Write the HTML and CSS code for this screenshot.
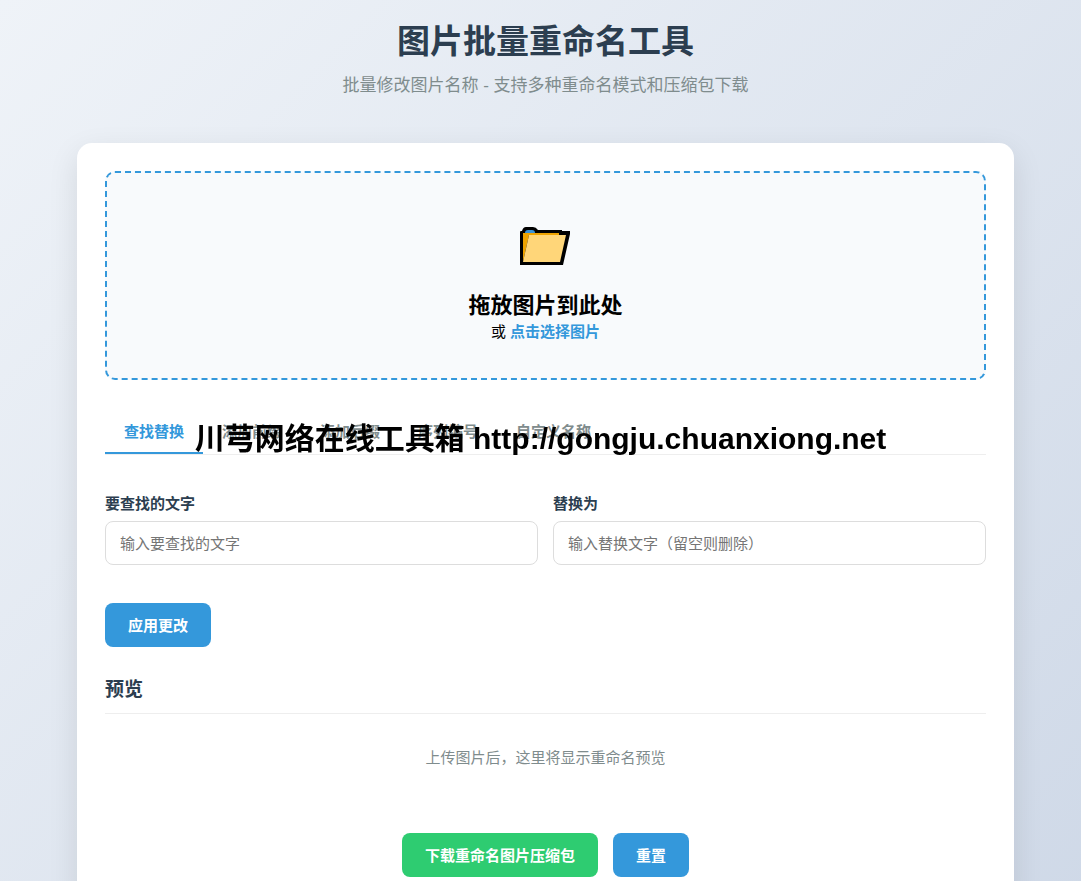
FILE: index.html
```html
<!DOCTYPE html>
<html lang="zh-CN">
<head>
  <meta charset="UTF-8">
  <meta name="viewport" content="width=device-width, initial-scale=1.0">
  <title>图片批量重命名工具</title>
  <link rel="stylesheet" href="styles.css">
</head>
<body>
  <div class="container">
    <header>
      <h1>图片批量重命名工具</h1>
      <p class="subtitle">批量修改图片名称 - 支持多种重命名模式和压缩包下载</p>
    </header>

    <main class="card">
      <div class="drop-area" id="dropArea">
        <svg class="folder-icon" viewBox="0 0 51 39" aria-hidden="true">
          <path d="M0 38V5Q0 4 1 4H2Q3 0 6 0H13Q16 0 18 3H42V4H50V7L43 38Z" fill="#000"/>
          <path d="M5 6Q5 3 8 3H12Q15 3 15 6Z" fill="#3a93d9"/>
          <path d="M3 6H39V8H9L3 35Z" fill="#eea300"/>
          <path d="M9 8H46L40 35H3Z" fill="#ffd679"/>
        </svg>
        <h2>拖放图片到此处</h2>
        <p>或 <label class="browse" for="fileInput">点击选择图片</label></p>
        <input type="file" id="fileInput" accept="image/*" multiple hidden>
      </div>

      <div class="tabs">
        <button type="button" class="tab active">查找替换</button>
        <button type="button" class="tab">添加前缀</button>
        <button type="button" class="tab">添加后缀</button>
        <button type="button" class="tab">序列编号</button>
        <button type="button" class="tab">自定义名称</button>
      </div>

      <form id="renameForm">
        <div class="form-row">
          <div class="form-group">
            <label for="findText">要查找的文字</label>
            <input type="text" id="findText" placeholder="输入要查找的文字">
          </div>
          <div class="form-group">
            <label for="replaceText">替换为</label>
            <input type="text" id="replaceText" placeholder="输入替换文字（留空则删除）">
          </div>
        </div>
        <button type="button" class="btn">应用更改</button>
      </form>

      <section class="preview">
        <h3>预览</h3>
        <p class="empty">上传图片后，这里将显示重命名预览</p>
      </section>

      <div class="actions">
        <button type="button" class="btn btn-success">下载重命名图片压缩包</button>
        <button type="button" class="btn">重置</button>
      </div>
    </main>
  </div>

  <div class="watermark">川芎网络在线工具箱 http://gongju.chuanxiong.net</div>
</body>
</html>
```
FILE: styles.css
```css
* {
  margin: 0;
  padding: 0;
  box-sizing: border-box;
}

body {
  font-family: "Liberation Sans", "Noto Sans CJK SC", sans-serif;
  font-size: 15px;
  line-height: 24px;
  color: #000;
  min-height: 100vh;
  padding: 16px 67px 60px 77px;
  background: linear-gradient(135deg, #eff3f8 0%, #ced8e7 100%);
}

.container {
  max-width: 1100px;
  margin: 0 auto;
}

header {
  text-align: center;
  margin-bottom: 45px;
}

h1 {
  font-size: 33px;
  line-height: 52px;
  margin-bottom: 6px;
  color: #2c3e50;
}

.subtitle {
  font-size: 17px;
  color: #7f8c8d;
}

.card {
  background: #fff;
  border-radius: 15px;
  padding: 28px;
  box-shadow: 0 10px 30px rgba(0, 0, 0, 0.1);
}

.drop-area {
  display: flex;
  flex-direction: column;
  align-items: center;
  padding: 54px 20px 34px;
  margin-bottom: 28px;
  text-align: center;
  background: #f8fafc;
  border: 2px dashed #3498db;
  border-radius: 10px;
}

.folder-icon {
  width: 51px;
  height: 39px;
  margin-bottom: 26px;
}

.drop-area h2 {
  font-size: 22px;
  line-height: 28px;
}

.browse {
  color: #3498db;
  font-weight: 600;
  cursor: pointer;
}

.tabs {
  display: flex;
  margin-bottom: 37px;
  border-bottom: 1px solid #eee;
}

.tab {
  padding: 12px 19px 10px;
  font: inherit;
  font-weight: 600;
  color: #7f8c8d;
  background: none;
  border: none;
  cursor: pointer;
}

.tab.active {
  color: #3498db;
  box-shadow: inset 0 -2px #3498db;
}

.form-row {
  display: grid;
  grid-template-columns: 1fr 1fr;
  gap: 15px;
  margin-bottom: 38px;
}

.form-group label {
  display: block;
  margin-bottom: 5px;
  font-weight: 600;
  color: #2c3e50;
}

.form-group input {
  width: 100%;
  height: 44px;
  padding: 0 14px;
  font: inherit;
  border: 1px solid #ddd;
  border-radius: 8px;
}

.btn {
  height: 44px;
  padding: 1px 23px 0;
  font: inherit;
  font-weight: 600;
  color: #fff;
  background: #3498db;
  border: none;
  border-radius: 8px;
  cursor: pointer;
}

.btn-success {
  background: #2ecc71;
}

.preview h3 {
  margin-top: 28px;
  padding-bottom: 8px;
  font-size: 19px;
  line-height: 30px;
  color: #2c3e50;
  border-bottom: 1px solid #eee;
}

.empty {
  padding: 32px 0;
  text-align: center;
  color: #7f8c8d;
}

.actions {
  display: flex;
  justify-content: center;
  gap: 15px;
  margin-top: 31px;
}

.watermark {
  position: fixed;
  top: 50%;
  left: 50%;
  transform: translate(-50%, -50%);
  font-size: 30px;
  font-weight: bold;
  line-height: 44px;
  padding-bottom: 4px;
  white-space: nowrap;
  pointer-events: none;
}
```
